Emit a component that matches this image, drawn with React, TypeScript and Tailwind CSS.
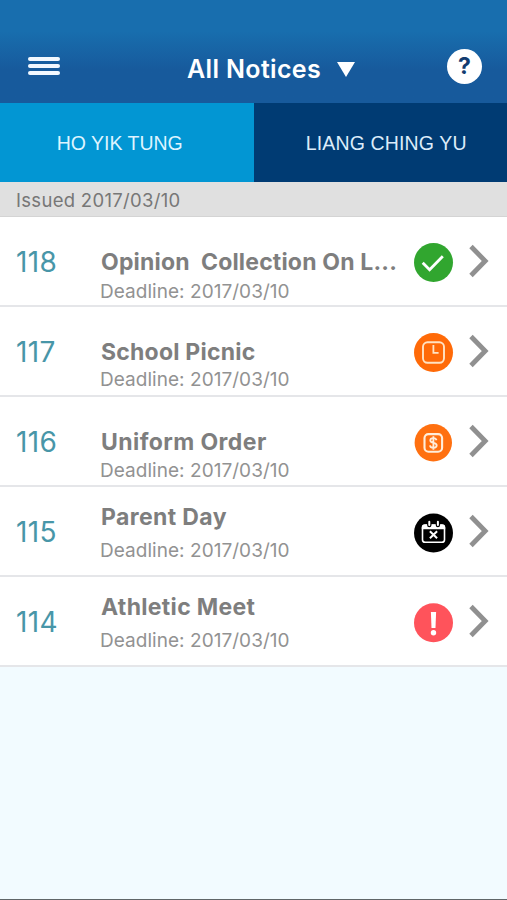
import type { ReactNode } from "react";

type Status = "done" | "pending" | "payment" | "expired" | "urgent";

type Notice = {
  id: number;
  title: string;
  deadline: string;
  status: Status;
  textClass: string;
  titleClass: string;
  deadlineClass: string;
};

const notices: Notice[] = [
  { id: 118, title: "Opinion  Collection On L...", deadline: "2017/03/10", status: "done", textClass: "pt-[31px]", titleClass: "tracking-[0.18px]", deadlineClass: "mt-[4px]" },
  { id: 117, title: "School Picnic", deadline: "2017/03/10", status: "pending", textClass: "pt-[31px]", titleClass: "tracking-[0.22px]", deadlineClass: "mt-[2px]" },
  { id: 116, title: "Uniform Order", deadline: "2017/03/10", status: "payment", textClass: "pt-[31px]", titleClass: "tracking-[0.42px]", deadlineClass: "mt-[3px]" },
  { id: 115, title: "Parent Day", deadline: "2017/03/10", status: "expired", textClass: "pt-[16px]", titleClass: "tracking-[0.38px]", deadlineClass: "mt-[8px]" },
  { id: 114, title: "Athletic Meet", deadline: "2017/03/10", status: "urgent", textClass: "pt-[16px]", titleClass: "tracking-[0.32px]", deadlineClass: "mt-[8px]" },
];

const statusArt: Record<Status, ReactNode> = {
  done: (
    <>
      <circle cx="19.5" cy="19.5" r="19.5" fill="#31a62f" />
      <path d="M8.7 19.8l6.9 7 13.2-13.6" fill="none" stroke="#fff" strokeWidth="2.8" />
    </>
  ),
  pending: (
    <>
      <circle cx="19.5" cy="19.5" r="19.5" fill="#ff6a08" />
      <rect x="9" y="9.3" width="21" height="20.5" rx="4.5" fill="none" stroke="#ffe3c4" strokeWidth="1.9" />
      <path d="M19.4 12.1v7.7h5.2" fill="none" stroke="#ffe3c4" strokeWidth="1.8" />
    </>
  ),
  payment: (
    <>
      <circle cx="19.3" cy="19.7" r="18.7" fill="#ff7010" />
      <rect x="10.5" y="11.1" width="17.6" height="17.6" rx="4" fill="none" stroke="#ffeedb" strokeWidth="2.1" />
      <path
        d="M22.5 17.3c-.3-1.5-1.5-2.2-3.1-2.2-1.8 0-3.1.8-3.1 2.3 0 3.2 6.4 1.5 6.4 4.9 0 1.7-1.4 2.5-3.3 2.5s-3.2-.8-3.4-2.5M19.4 13.3v13.4"
        fill="none"
        stroke="#ffeedb"
        strokeWidth="1.8"
      />
    </>
  ),
  expired: (
    <>
      <circle cx="19.5" cy="20" r="19.5" fill="#000" />
      <rect x="8.5" y="12" width="22" height="17.3" rx="2.6" fill="none" stroke="#fff" strokeWidth="1.6" />
      <path d="M7.8 14.5a3 3 0 0 1 3-3h17.4a3 3 0 0 1 3 3v1.8H7.8z" fill="#fff" />
      <path d="M15.3 8.5v3.6M23.9 8.5v3.6" stroke="#000" strokeWidth="4.4" strokeLinecap="round" />
      <path d="M15.3 8.7v3.4M23.9 8.7v3.4" stroke="#fff" strokeWidth="2" strokeLinecap="round" />
      <path d="M15.9 18.3l7.2 7M23.1 18.3l-7.2 7" stroke="#fff" strokeWidth="2" />
    </>
  ),
  urgent: (
    <>
      <circle cx="19.5" cy="19.7" r="19.5" fill="#ff535b" />
      <path d="M16.9 8.9h5.2l-.6 16h-4z" fill="#fff" />
      <circle cx="19.5" cy="29.7" r="2.7" fill="#fff" />
    </>
  ),
};

function Chevron() {
  return (
    <svg width="20" height="34" viewBox="0 0 20 34" className="mb-[3px] ml-[15px] shrink-0" aria-hidden="true">
      <path d="M2 2.5L16.2 17 2 31.5" fill="none" stroke="#909090" strokeWidth="4.8" />
    </svg>
  );
}

function Header() {
  return (
    <header className="flex h-[103px] items-start bg-linear-to-b from-[#186eae] from-30% to-[#175a9c] to-68% pl-[28px] pr-[25px] text-white">
      <div className="mt-[57px] flex w-[159px] flex-col gap-[3px]">
        <span className="h-[4px] w-[32px] rounded-full bg-[#f2f8ff]" />
        <span className="h-[4px] w-[32px] rounded-full bg-[#f2f8ff]" />
        <span className="h-[4px] w-[32px] rounded-full bg-[#f2f8ff]" />
      </div>
      <h1 className="mt-[54px] text-[25px] leading-[30px] font-semibold tracking-[0.35px] whitespace-nowrap">All Notices</h1>
      <svg width="18" height="15" viewBox="0 0 18 15" className="mt-[62px] ml-[16px]" aria-hidden="true">
        <path d="M0 0h18L9 15z" fill="#fff" />
      </svg>
      <div className="mt-[49px] ml-auto flex size-[35px] items-center justify-center rounded-full bg-white text-[23px] leading-none font-bold text-[#123c70]">
        ?
      </div>
    </header>
  );
}

function NoticeRow({ notice }: { notice: Notice }) {
  return (
    <li className="flex h-[90px] border-b-2 border-[#e5e6e9] bg-white pr-[18px] pl-[16px]">
      <div className="w-[85px] shrink-0 pt-[29px] text-[28px] leading-[32px] tracking-[0.3px] text-[#4896a8]">{notice.id}</div>
      <div className={`min-w-0 flex-1 ${notice.textClass}`}>
        <div className={`text-[23px] leading-[28px] font-bold whitespace-pre text-[#7e7e7e] ${notice.titleClass}`}>{notice.title}</div>
        <div className={`-ml-px text-[19px] leading-[24px] tracking-[0.04px] whitespace-nowrap text-[#929292] ${notice.deadlineClass}`}>
          Deadline: {notice.deadline}
        </div>
      </div>
      <div className="-ml-px flex h-[91px] shrink-0 items-center">
        <svg width="40" height="40" viewBox="0 0 40 40" aria-hidden="true">
          {statusArt[notice.status]}
        </svg>
        <Chevron />
      </div>
    </li>
  );
}

export default function App() {
  return (
    <div className="flex h-[900px] w-[507px] flex-col overflow-hidden border-b border-[#606668] bg-[#f2fbff] font-['Inter',sans-serif]">
      <Header />
      <nav className="grid h-[79px] grid-cols-2 text-[19.5px] font-['Liberation_Sans',sans-serif]">
        <div className="flex items-center justify-center bg-[#0296d3] pt-[2px] pr-[14px] text-[#def4ff]">HO YIK TUNG</div>
        <div className="flex items-center justify-center bg-[#003b73] pt-[2px] pl-[12px] tracking-[0.15px] text-[#dcecfa]">LIANG CHING YU</div>
      </nav>
      <div className="flex h-[35px] items-center border-b border-[#d4d4d4] bg-[#e0e0e0] pt-[3px] pl-[16px] text-[18.5px] tracking-[0.3px] text-[#777]">
        Issued 2017/03/10
      </div>
      <ul>
        {notices.map((n) => (
          <NoticeRow key={n.id} notice={n} />
        ))}
      </ul>
    </div>
  );
}
